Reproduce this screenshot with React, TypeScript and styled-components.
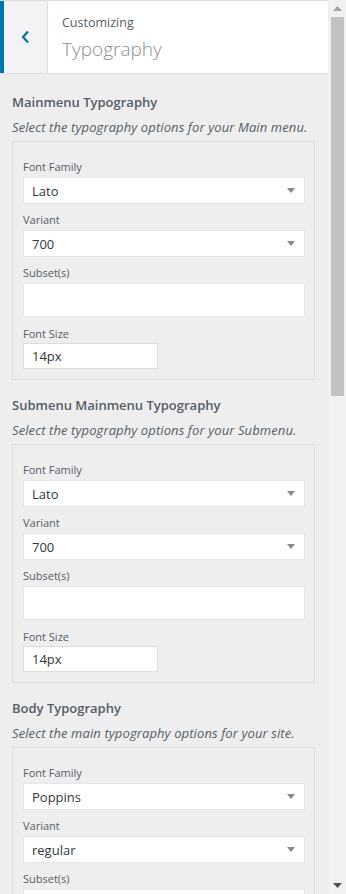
import React from 'react';
import styled, { createGlobalStyle } from 'styled-components';

const GlobalStyle = createGlobalStyle`
    html, body {
        margin: 0;
        padding: 0;
        background: #eeeeee;
        font-family: "Open Sans", "Noto Sans", sans-serif;
        overflow: hidden;
    }
`;

const Page = styled.div`
    width: 346px;
    height: 894px;
    display: flex;
    overflow: hidden;
`;

const Panel = styled.div`
    width: 328px;
    display: flex;
    flex-direction: column;
    background: #eeeeee;
    & > * {
        flex-shrink: 0;
    }
`;

const Header = styled.div`
    height: 72px;
    display: flex;
    background: #ffffff;
    border-top: 1px solid #dddddd;
    border-bottom: 1px solid #dddddd;
`;

const BackButton = styled.div`
    width: 43px;
    background: #f3f3f5;
    border-left: 4px solid #0073aa;
    border-right: 1px solid #dddddd;
    display: flex;
    align-items: center;
    justify-content: center;
`;

const HeaderText = styled.div`
    padding: 12px 0 0 14px;
    display: flex;
    flex-direction: column;
`;

const Crumb = styled.span`
    font-size: 12.5px;
    line-height: 20px;
    color: #555d66;
`;

const PanelTitle = styled.span`
    font-size: 19px;
    line-height: 28px;
    font-weight: 300;
    color: #8c8f94;
    margin-top: 2px;
`;

const Section = styled.div`
    padding: 0 12px 0 12px;
    margin-top: ${(p: { $first?: boolean }) => (p.$first ? '18px' : '15px')};
`;

const SectionTitle = styled.h3`
    margin: 0;
    font-size: 13px;
    line-height: 20px;
    font-weight: 600;
    color: #555d66;
`;

const Description = styled.p`
    margin: 5px 0 4px 0;
    font-size: 13px;
    line-height: 20px;
    letter-spacing: 0.1px;
    font-style: italic;
    color: #555d66;
    white-space: nowrap;
`;

const Box = styled.div`
    width: 303px;
    box-sizing: border-box;
    border: 1px solid #dddddd;
    padding: 17px 10px 10px 10px;
    display: flex;
    flex-direction: column;
`;

const Field = styled.div<{ $gap: number }>`
    display: flex;
    flex-direction: column;
    margin-bottom: ${(p) => p.$gap}px;
    &:last-child {
        margin-bottom: 0;
    }
`;

const Label = styled.label<{ $space: number }>`
    font-size: 11px;
    line-height: 16px;
    color: #555d66;
    margin-bottom: ${(p) => p.$space}px;
`;

const Select = styled.div`
    height: 27px;
    width: 282px;
    box-sizing: border-box;
    background: #ffffff;
    border: 1px solid #e6e6e6;
    display: flex;
    align-items: center;
    justify-content: space-between;
    padding: 0 9px 0 8px;
    font-size: 13px;
    color: #32373c;
`;

const MultiBox = styled.div`
    height: 34px;
    width: 282px;
    box-sizing: border-box;
    background: #ffffff;
    border: 1px solid #e6e6e6;
`;

const TextInput = styled.div`
    height: 26px;
    width: 135px;
    box-sizing: border-box;
    background: #ffffff;
    border: 1px solid #dddddd;
    padding: 0 8px;
    display: flex;
    align-items: center;
    font-size: 13px;
    color: #32373c;
`;

const Scrollbar = styled.div`
    width: 17px;
    margin-left: 1px;
    background: #f1f1f1;
    display: flex;
    flex-direction: column;
    align-items: center;
`;

const ArrowCell = styled.div`
    height: 17px;
    width: 17px;
    flex-shrink: 0;
    display: flex;
    align-items: center;
    justify-content: center;
`;

const Thumb = styled.div`
    width: 13px;
    height: 379px;
    flex-shrink: 0;
    background: #c1c1c1;
`;

const Track = styled.div`
    flex: 1;
`;

const Caret = () => (
    <svg width="8" height="5" viewBox="0 0 8 5">
        <path d="M0 0 L8 0 L4 5 Z" fill="#888888" />
    </svg>
);

const Chevron = () => (
    <svg width="9" height="14" viewBox="0 0 9 14">
        <path d="M7 1.5 L2 7 L7 12.5" fill="none" stroke="#0073aa" strokeWidth="2.2" />
    </svg>
);

interface GroupProps {
    title: string;
    description: string;
    family: string;
    variant: string;
    first?: boolean;
}

const TypographyGroup = ({ title, description, family, variant, first }: GroupProps) => (
    <Section $first={first}>
        <SectionTitle>{title}</SectionTitle>
        <Description>{description}</Description>
        <Box>
            <Field $gap={8}>
                <Label $space={2}>Font Family</Label>
                <Select>
                    <span>{family}</span>
                    <Caret />
                </Select>
            </Field>
            <Field $gap={8}>
                <Label $space={2}>Variant</Label>
                <Select>
                    <span>{variant}</span>
                    <Caret />
                </Select>
            </Field>
            <Field $gap={9}>
                <Label $space={2}>Subset(s)</Label>
                <MultiBox />
            </Field>
            <Field $gap={0}>
                <Label $space={1}>Font Size</Label>
                <TextInput>14px</TextInput>
            </Field>
        </Box>
    </Section>
);

export default function App() {
    return (
        <Page>
            <GlobalStyle />
            <Panel>
                <Header>
                    <BackButton>
                        <Chevron />
                    </BackButton>
                    <HeaderText>
                        <Crumb>Customizing</Crumb>
                        <PanelTitle>Typography</PanelTitle>
                    </HeaderText>
                </Header>
                <TypographyGroup
                    first
                    title="Mainmenu Typography"
                    description="Select the typography options for your Main menu."
                    family="Lato"
                    variant="700"
                />
                <TypographyGroup
                    title="Submenu Mainmenu Typography"
                    description="Select the typography options for your Submenu."
                    family="Lato"
                    variant="700"
                />
                <TypographyGroup
                    title="Body Typography"
                    description="Select the main typography options for your site."
                    family="Poppins"
                    variant="regular"
                />
            </Panel>
            <Scrollbar>
                <ArrowCell>
                    <svg width="9" height="5" viewBox="0 0 9 5">
                        <path d="M4.5 0 L9 5 L0 5 Z" fill="#a3a3a3" />
                    </svg>
                </ArrowCell>
                <Thumb />
                <Track />
                <ArrowCell>
                    <svg width="9" height="5" viewBox="0 0 9 5">
                        <path d="M0 0 L9 0 L4.5 5 Z" fill="#505050" />
                    </svg>
                </ArrowCell>
            </Scrollbar>
        </Page>
    );
}
